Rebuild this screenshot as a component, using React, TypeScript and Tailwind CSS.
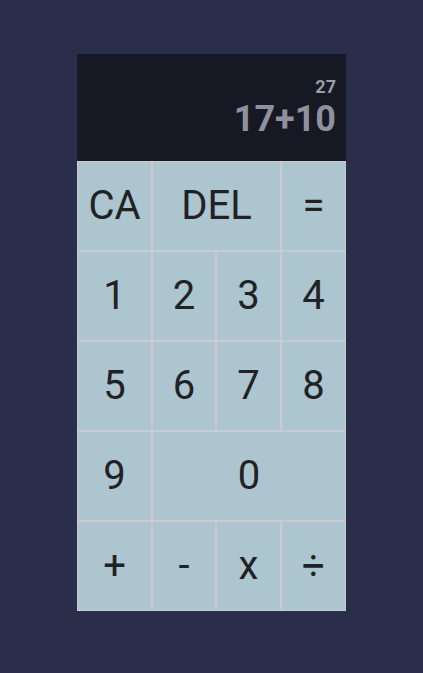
const KEYS: { label: string; span?: string }[] = [
  { label: "CA" },
  { label: "DEL", span: "col-span-2" },
  { label: "=" },
  { label: "1" },
  { label: "2" },
  { label: "3" },
  { label: "4" },
  { label: "5" },
  { label: "6" },
  { label: "7" },
  { label: "8" },
  { label: "9" },
  { label: "0", span: "col-span-3" },
  { label: "+" },
  { label: "-" },
  { label: "x" },
  { label: "÷" },
];

export default function App() {
  return (
    <div
      className="min-h-screen bg-[#2b2e4b] flex justify-center pt-[54px]"
      style={{ fontFamily: "Roboto, 'Noto Sans', sans-serif" }}
    >
      <div className="grid grid-cols-[75px_64px_65px_65px] grid-rows-[107px_repeat(5,90px)] h-fit">
        {/* output screen */}
        <div className="col-span-4 bg-[#161824] flex flex-col items-end justify-end pr-[10px] pb-[24px]">
          <div className="text-[18px] leading-none font-bold text-[#9a9ca7]">27</div>
          <div className="mt-[5px] text-[36px] leading-none font-bold text-[#8f919c]">17+10</div>
        </div>

        {KEYS.map((k) => (
          <button
            key={k.label}
            className={`${k.span ?? ""} bg-[#adc5cf] border border-[#c9cbcf] text-[40px] leading-none text-[#202226] flex items-center justify-center`}
          >
            {k.label}
          </button>
        ))}
      </div>
    </div>
  );
}
